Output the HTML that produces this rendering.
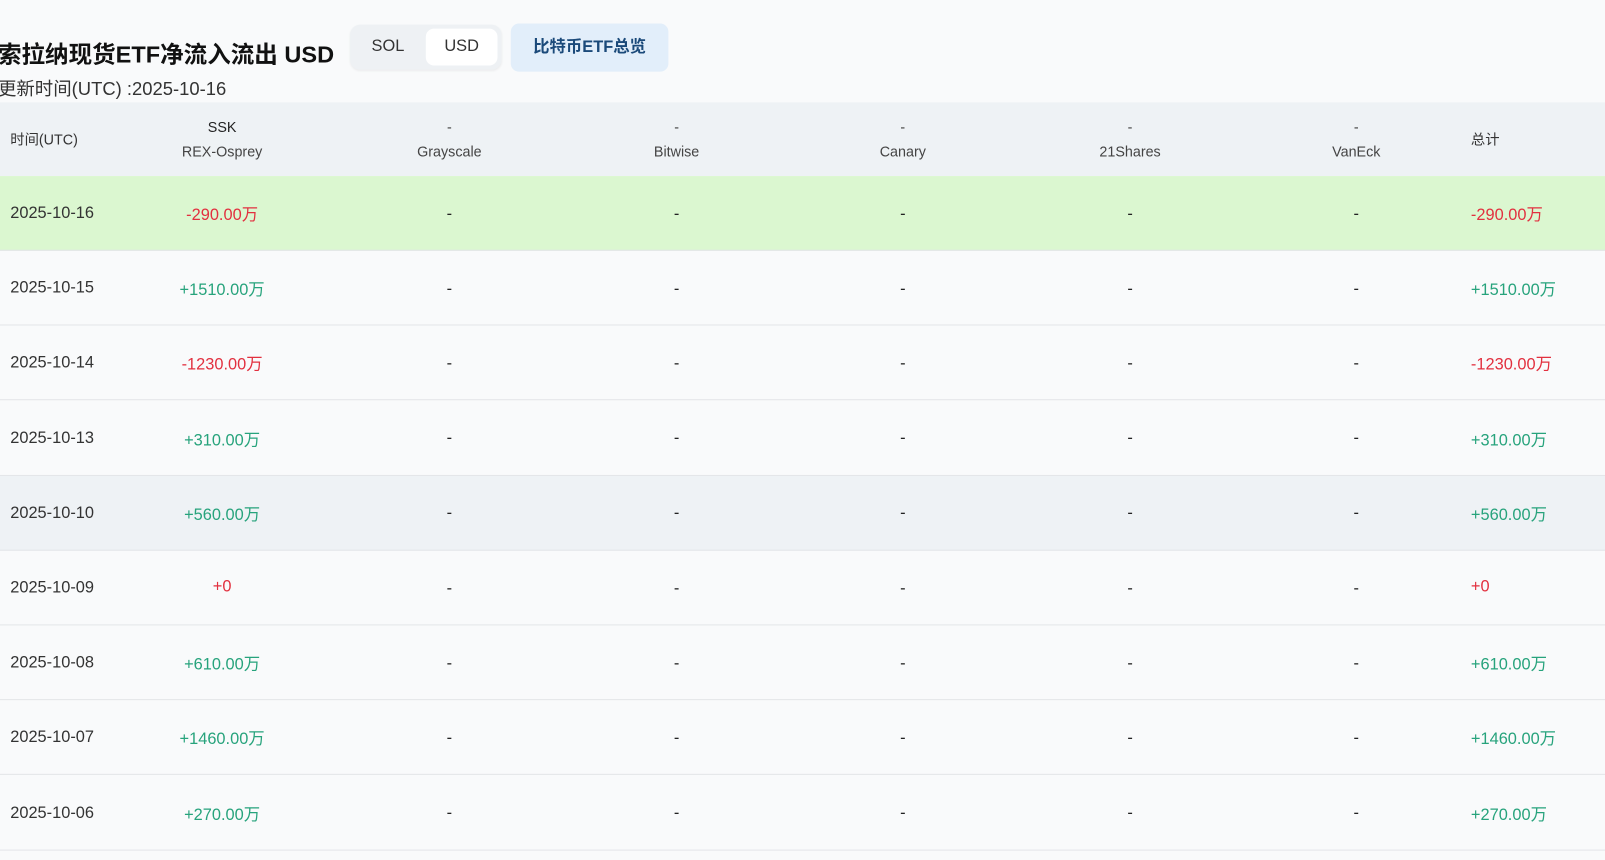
<!DOCTYPE html>
<html><head><meta charset="utf-8"><style>
*{margin:0;padding:0;box-sizing:border-box}
body{width:1605px;height:858px;overflow:hidden;background:#f9fafb;font-family:"Liberation Sans","Noto Sans CJK SC",sans-serif;color:#222}
#w{position:absolute;left:0;top:0;width:1568px;height:840px;transform:scale(1.0236);transform-origin:0 0}
.t{position:absolute;left:-2px;top:34px;font-size:23px;font-weight:bold;color:#111;white-space:nowrap}
.seg{position:absolute;left:342px;top:24px;width:148px;height:44px;background:#eef1f4;border-radius:10px;box-shadow:0 1px 2px rgba(0,0,0,.06)}
.seg span{position:absolute;top:4px;height:36px;line-height:36px;font-size:16px;color:#333;text-align:center}
.btc{position:absolute;left:499px;top:23px;width:154px;height:47px;background:#e2eefa;border-radius:8px;color:#1b4a7a;font-weight:bold;font-size:16px;line-height:47px;text-align:center}
.u{position:absolute;left:-2px;top:73px;font-size:18px;color:#333;white-space:nowrap}
.hd{position:absolute;left:0;top:100px;width:1568px;height:72px;background:#eef2f5}
.row{position:absolute;left:0;width:1568px;height:73px;border-bottom:1px solid #e3e5e8}
.c{position:absolute;top:0;height:100%;display:flex;align-items:center;justify-content:center;font-size:16px;white-space:nowrap}
.h2{flex-direction:column;font-size:14px;color:#444;line-height:24px}
.r{color:#e2303f}.g{color:#27a37c}
</style></head><body><div id="w">
<div class="t">索拉纳现货ETF净流入流出 USD</div>
<div class="seg"><span style="left:4px;width:66px">SOL</span><span style="left:74px;width:70px;background:#fff;border-radius:8px">USD</span></div>
<div class="btc">比特币ETF总览</div>
<div class="u">更新时间(UTC) :2025-10-16</div>
<div class="hd">
<div class="c" style="left:10px;font-size:14px;color:#333">时间(UTC)</div>
<div class="c h2" style="left:157px;width:120px"><span style="color:#222">SSK</span><span>REX-Osprey</span></div>
<div class="c h2" style="left:379px;width:120px"><span>-</span><span>Grayscale</span></div>
<div class="c h2" style="left:601px;width:120px"><span>-</span><span>Bitwise</span></div>
<div class="c h2" style="left:822px;width:120px"><span>-</span><span>Canary</span></div>
<div class="c h2" style="left:1044px;width:120px"><span>-</span><span>21Shares</span></div>
<div class="c h2" style="left:1265px;width:120px"><span>-</span><span>VanEck</span></div>
<div class="c" style="left:1437px;font-size:14px;color:#333">总计</div>
</div>
<div id="rows"></div>
</div>
<script>
var d=[["2025-10-16","-290.00万","r"],["2025-10-15","+1510.00万","g"],["2025-10-14","-1230.00万","r"],["2025-10-13","+310.00万","g"],["2025-10-10","+560.00万","g"],["2025-10-09","+0","r"],["2025-10-08","+610.00万","g"],["2025-10-07","+1460.00万","g"],["2025-10-06","+270.00万","g"]];
var h="";
d.forEach(function(r,i){
var bg=i==0?"#dbf7d0":(i==4?"#eef2f5":"transparent");
h+='<div class="row" style="top:'+(172+i*73.2)+'px;background:'+bg+'">';
h+='<div class="c" style="left:10px;color:#333;padding-top:2px">'+r[0]+'</div>';
h+='<div class="c '+r[2]+'" style="left:137px;width:160px">'+r[1]+'</div>';
[439,661,882,1104,1325].forEach(function(x){h+='<div class="c" style="left:'+(x-20)+'px;width:40px;padding-top:3px">-</div>'});
h+='<div class="c '+r[2]+'" style="left:1437px">'+r[1]+'</div></div>';
});
document.getElementById("rows").innerHTML=h;
</script>
</body></html>
